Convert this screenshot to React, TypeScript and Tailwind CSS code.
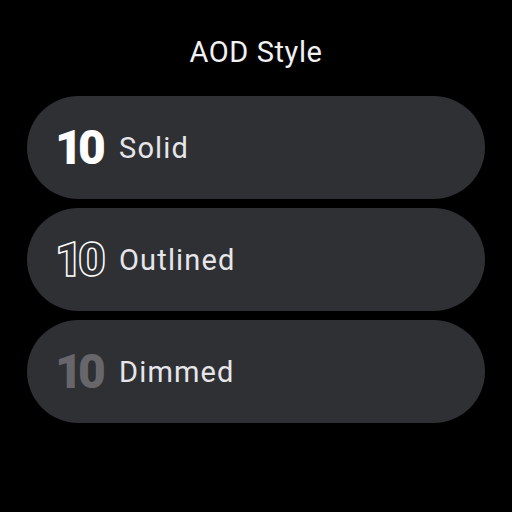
import React from 'react';

const options = [
  { label: 'Solid', kind: 'solid' },
  { label: 'Outlined', kind: 'outlined' },
  { label: 'Dimmed', kind: 'dimmed' },
];

function Digits({ kind }: { kind: string }) {
  const base =
    "font-['Roboto',sans-serif] font-black text-[48px] leading-none tracking-[-0.1em]";
  if (kind === 'outlined') {
    return (
      <span className={`${base} text-transparent [-webkit-text-stroke:1.5px_#ffffff]`}>10</span>
    );
  }
  if (kind === 'dimmed') {
    return <span className={`${base} text-[#67676b]`}>10</span>;
  }
  return <span className={`${base} text-white`}>10</span>;
}

export default function App() {
  return (
    <div className="w-[512px] h-[512px] bg-black flex flex-col items-center font-['Roboto',sans-serif]">
      <h1 className="mt-[34px] h-[36px] text-[29px] leading-[36px] text-[#f1f1f3] tracking-[0.02em]">
        AOD Style
      </h1>
      <div className="mt-[26px] flex flex-col gap-[9px]">
        {options.map((o) => (
          <div
            key={o.label}
            className="w-[458px] h-[103px] rounded-full bg-[#2f3034] flex items-center pl-[28px] gap-[16px]"
          >
            <div className="w-[48px] flex items-center">
              <Digits kind={o.kind} />
            </div>
            <span className="text-[29px] font-normal text-[#e6e6ea] tracking-[0.04em] mt-[2px]">
              {o.label}
            </span>
          </div>
        ))}
      </div>
    </div>
  );
}
